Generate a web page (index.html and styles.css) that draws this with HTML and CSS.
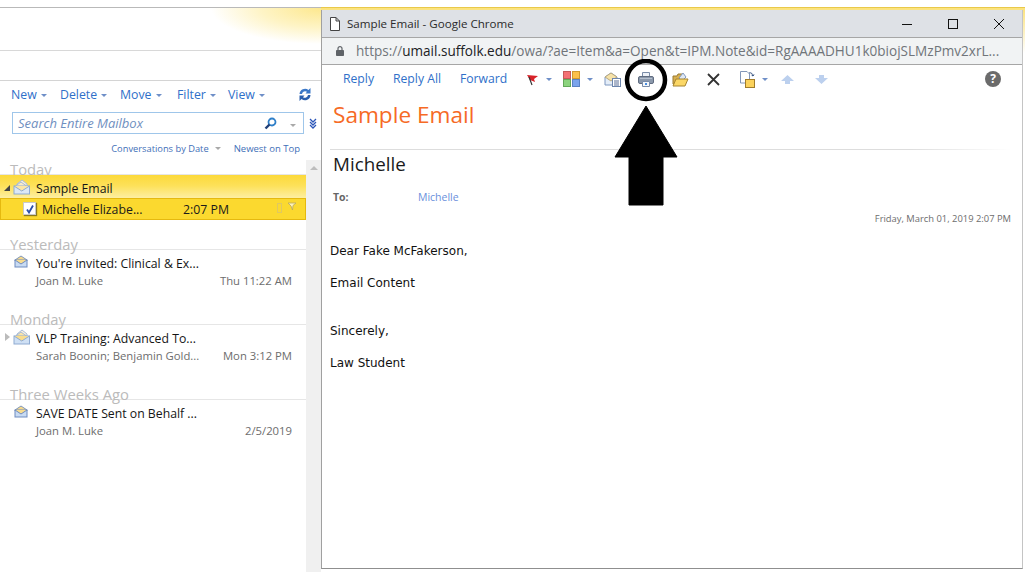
FILE: index.html
```html
<!DOCTYPE html>
<html lang="en">
<head>
  <meta charset="UTF-8">
  <meta name="viewport" content="width=device-width, initial-scale=1.0">
  <title>Sample Email</title>
  <link rel="stylesheet" href="styles.css">
</head>
<body>
  <div class="mailbox">
    <div class="banner"></div>
    <div class="nav-strip"></div>

    <div class="mail-tools">
      <a class="tool tool-new">New <i class="caret"></i></a>
      <a class="tool tool-delete">Delete <i class="caret"></i></a>
      <a class="tool tool-move">Move <i class="caret"></i></a>
      <a class="tool tool-filter">Filter <i class="caret"></i></a>
      <a class="tool tool-view">View <i class="caret"></i></a>
      <svg class="refresh" width="14" height="15" viewBox="0 0 14 15">
        <path d="M1.5 7A5.5 5.5 0 0 1 10.5 3L12.5 1V6.500H7.500L9 4.800A3.200 3.200 0 0 0 4 7Z" fill="#3b78c8"/>
        <path d="M12.500 8A5.500 5.500 0 0 1 3.500 12L1.500 14V8.500H6.500L5 10.200A3.200 3.200 0 0 0 10 8Z" fill="#2a5fae"/>
      </svg>
    </div>

    <div class="search-row">
      <div class="search-box">
        <span class="search-text">Search Entire Mailbox</span>
        <svg class="search-icon" width="13" height="13" viewBox="0 0 13 13">
          <circle cx="8" cy="5" r="3.500" fill="#fff" stroke="#2f7fc8" stroke-width="1.800"/>
          <path d="M5.500 7.500L1.500 11.500" stroke="#1f3f78" stroke-width="2.400"/>
        </svg>
        <i class="caret caret-grey"></i>
      </div>
      <svg class="expand" width="8" height="11" viewBox="0 0 8 11">
        <path d="M1 1L4 4L7 1M1 4L4 7L7 4M1 7L4 10L7 7" fill="none" stroke="#2b55b8" stroke-width="1.300"/>
      </svg>
    </div>

    <div class="sort-row">
      <span>Conversations by Date</span>
      <i class="caret caret-grey"></i>
      <span class="sort-order">Newest on Top</span>
    </div>

    <div class="list-wrap">
      <div class="mail-list">
        <section class="group">
          <h3 class="group-title">Today</h3>
          <div class="conv conv-open">
            <i class="twist twist-open"></i>
            <svg class="env" width="18" height="16" viewBox="0 0 18 16">
              <path d="M4 5L9 1L14 5V8H4Z" fill="#f7f1df" stroke="#a9bcd8"/>
              <path d="M2.500 7L8 3L13.500 7V9H2.500Z" fill="#f8ecc8" stroke="#a9bcd8"/>
              <rect x="1" y="7" width="15.500" height="8" fill="#dce8f6" stroke="#8fabd2"/>
              <path d="M1 7L8.750 12L16.500 7" fill="#fbe6a8" stroke="#8fabd2"/>
            </svg>
            <span class="subject">Sample Email</span>
          </div>
          <div class="conv-item">
            <span class="check">
              <svg width="10" height="10" viewBox="0 0 10 10"><path d="M2 5.500L4 8.500L8 1.500" fill="none" stroke="#2b4fa8" stroke-width="1.800"/></svg>
            </span>
            <span class="item-from">Michelle Elizabe...</span>
            <span class="item-time">2:07 PM</span>
            <i class="item-mark"></i>
            <svg class="item-flag" width="10" height="9" viewBox="0 0 10 9"><path d="M1 1H9L6 3.500L5.500 8L4 4Z" fill="#fff3b8" stroke="#b8a860" stroke-width=".8"/></svg>
          </div>
        </section>

        <section class="group">
          <h3 class="group-title">Yesterday</h3>
          <div class="conv">
            <svg class="env env-single" width="14" height="13" viewBox="0 0 14 13">
              <path d="M1 5L7 1L13 5V6H1Z" fill="#f6d98c" stroke="#8098bc"/>
              <rect x="1" y="5" width="12" height="7" fill="#c9dbf2" stroke="#6f8cc0"/>
              <path d="M1 5L7 9L13 5" fill="#f8dc8e" stroke="#6f8cc0"/>
            </svg>
            <span class="subject">You're invited: Clinical &amp; Ex...</span>
          </div>
          <div class="conv-meta"><span>Joan M. Luke</span><span>Thu 11:22 AM</span></div>
        </section>

        <section class="group">
          <h3 class="group-title">Monday</h3>
          <div class="conv">
            <i class="twist"></i>
            <svg class="env" width="18" height="16" viewBox="0 0 18 16">
              <path d="M4 5L9 1L14 5V8H4Z" fill="#f7f1df" stroke="#a9bcd8"/>
              <path d="M2.500 7L8 3L13.500 7V9H2.500Z" fill="#f8e4a8" stroke="#a9bcd8"/>
              <rect x="1" y="7" width="15.500" height="8" fill="#cfe0f4" stroke="#8fabd2"/>
              <path d="M1 7L8.750 12L16.500 7" fill="#f8dc8e" stroke="#8fabd2"/>
            </svg>
            <span class="subject">VLP Training: Advanced To...</span>
          </div>
          <div class="conv-meta"><span>Sarah Boonin; Benjamin Gold...</span><span>Mon 3:12 PM</span></div>
        </section>

        <section class="group">
          <h3 class="group-title">Three Weeks Ago</h3>
          <div class="conv">
            <svg class="env env-single" width="14" height="13" viewBox="0 0 14 13">
              <path d="M1 5L7 1L13 5V6H1Z" fill="#f6d98c" stroke="#8098bc"/>
              <rect x="1" y="5" width="12" height="7" fill="#c9dbf2" stroke="#6f8cc0"/>
              <path d="M1 5L7 9L13 5" fill="#f8dc8e" stroke="#6f8cc0"/>
            </svg>
            <span class="subject">SAVE DATE Sent on Behalf ...</span>
          </div>
          <div class="conv-meta"><span>Joan M. Luke</span><span>2/5/2019</span></div>
        </section>
      </div>
      <div class="scrollbar"><i class="scroll-up"></i></div>
    </div>
  </div>

  <div class="popup-wrap">
    <div class="popup">
      <div class="titlebar">
        <svg class="page-icon" width="10" height="14" viewBox="0 0 10 14">
          <path d="M.5.500H6L9.500 4V13.500H.5ZM6 .5V4H9.500" fill="#fff" stroke="#444"/>
        </svg>
        <span class="title-text">Sample Email - Google Chrome</span>
        <svg class="win-btn win-min" width="10" height="10" viewBox="0 0 10 10"><path d="M0 5.500H10" stroke="#111"/></svg>
        <svg class="win-btn win-max" width="10" height="10" viewBox="0 0 10 10"><rect x=".5" y=".5" width="9" height="9" fill="none" stroke="#111"/></svg>
        <svg class="win-btn win-close" width="10" height="10" viewBox="0 0 10 10"><path d="M0 0L10 10M10 0L0 10" stroke="#111"/></svg>
      </div>

      <div class="addressbar">
        <svg class="lock" width="8" height="10" viewBox="0 0 8 10">
          <path d="M2 4V2.600A2 2 0 0 1 6 2.600V4" fill="none" stroke="#5f6368" stroke-width="1.200"/>
          <rect y="4" width="8" height="6" rx=".8" fill="#5f6368"/>
        </svg>
        <span class="url">https://<b>umail.suffolk.edu</b>/owa/?ae=Item&amp;a=Open&amp;t=IPM.Note&amp;id=RgAAAADHU1k0biojSLMzPmv2xrL...</span>
      </div>

      <div class="read-tools">
        <a class="rt-link rt-reply">Reply</a>
        <a class="rt-link rt-replyall">Reply All</a>
        <a class="rt-link rt-forward">Forward</a>
        <svg class="rt-flag" width="13" height="13" viewBox="0 0 13 13">
          <path d="M1 2L12 3L8 6L9 9L4 7Z" fill="#d8232a"/>
          <path d="M3 4L6 12" stroke="#333" stroke-width="1.200"/>
        </svg>
        <i class="caret rt-caret"></i>
        <svg class="rt-colors" width="17" height="16" viewBox="0 0 17 16">
          <rect x=".5" y=".5" width="7" height="7" fill="#f47174" stroke="#c65a5a"/>
          <rect x="9.500" y=".5" width="7" height="7" fill="#fbc04a" stroke="#d09a30"/>
          <rect x=".5" y="8.500" width="7" height="7" fill="#8cd47e" stroke="#64a85a"/>
          <rect x="9.500" y="8.500" width="7" height="7" fill="#7ba4ec" stroke="#5b82c4"/>
        </svg>
        <i class="caret rt-caret"></i>
        <svg class="rt-envdoc" width="17" height="15" viewBox="0 0 17 15">
          <path d="M1 5L7 1L13 5V13H1Z" fill="#e4edf8" stroke="#7f98c0"/>
          <path d="M1 5L7 9L13 5L7 1Z" fill="#f6e2a8" stroke="#b8a880"/>
          <rect x="8.500" y="6.500" width="8" height="8" fill="#fff" stroke="#6d86ae"/>
          <path d="M10 9H15M10 11H15M10 13H15" stroke="#5a6f96"/>
        </svg>
        <svg class="rt-print" width="16" height="15" viewBox="0 0 16 15">
          <path d="M4.500.5H11.500V5H4.500Z" fill="#eef2f8" stroke="#7a8ca8"/>
          <rect x=".5" y="4.500" width="15" height="7" rx="1.500" fill="#8b98ab" stroke="#606c80"/>
          <path d="M4.500 9.500H11.500V14.500H4.500Z" fill="#f4f7fb" stroke="#7a8ca8"/>
          <rect x="7" y="11" width="2" height="2" fill="#4a8fe0"/>
          <path d="M2 6.500H14" stroke="#b6c0ce"/>
        </svg>
        <svg class="rt-folder" width="17" height="15" viewBox="0 0 17 15">
          <path d="M1 4H5L6 2H10V12H1Z" fill="#d8b050" stroke="#9a7a30"/>
          <path d="M7 6L11 1L14 5L10 9Z" fill="#dfe8f4" stroke="#7f98c0"/>
          <path d="M1 14L4 7H16L13 14Z" fill="#fbd766" stroke="#a68430"/>
        </svg>
        <svg class="rt-delete" width="13" height="13" viewBox="0 0 13 13">
          <path d="M1 1L12 12M12 1L1 12" stroke="#333" stroke-width="1.800"/>
        </svg>
        <svg class="rt-move" width="15" height="17" viewBox="0 0 15 17">
          <path d="M.5.500H7L9.500 3V12H.5Z" fill="#fff" stroke="#8296b8"/>
          <path d="M9 2A3 3 0 0 1 13 5M13 5L11.500 4M13 5L14 3.500" fill="none" stroke="#33507f"/>
          <rect x="5.500" y="8.500" width="9" height="8" fill="#fbd25c" stroke="#a07c2c"/>
        </svg>
        <i class="caret rt-caret"></i>
        <svg class="rt-prev" width="13" height="9" viewBox="0 0 13 9"><path d="M0 6L6.500 0L13 6H9V9H4V6Z" fill="#bcd0ee"/></svg>
        <svg class="rt-next" width="13" height="9" viewBox="0 0 13 9"><path d="M0 3L6.500 9L13 3H9V0H4V3Z" fill="#bcd0ee"/></svg>
        <span class="rt-help">?</span>
      </div>

      <div class="message">
        <h1 class="msg-subject">Sample Email</h1>
        <div class="msg-rule"></div>
        <h2 class="msg-from">Michelle</h2>
        <div class="msg-to"><b>To:</b><a>Michelle</a></div>
        <div class="msg-date">Friday, March 01, 2019 2:07 PM</div>
        <div class="msg-body">
          <p>Dear Fake McFakerson,</p>
          <p>Email Content</p>
          <p class="gap">Sincerely,</p>
          <p>Law Student</p>
        </div>
      </div>
    </div>
  </div>

  <svg class="callout" width="64" height="148" viewBox="0 0 64 148">
    <circle cx="32" cy="21" r="19" fill="none" stroke="#000" stroke-width="4.500"/>
    <path d="M32 47L63 98H49V146H15V98H1Z" fill="#000" stroke="#000" stroke-linejoin="round"/>
  </svg>
</body>
</html>
```

FILE: styles.css
```css
* {
  box-sizing: border-box;
}
html, body {
  margin: 0;
  height: 572px;
  overflow: hidden;
}
body {
  display: flex;
  background-color: #fff;
  color: #1a1a1a;
  font-family: "Open Sans", "Noto Sans", sans-serif;
  position: relative;
}
a {
  color: #2f6fc9;
}

/* left side, the mailbox */
.mailbox {
  width: 321px;
  flex: none;
  display: flex;
  flex-direction: column;
}
.banner {
  margin-top: 7px;
  height: 44px;
  border-top: 1px solid #b9b9b9;
  border-bottom: 1px solid #d8d8d8;
  background: radial-gradient(ellipse 110px 36px at 321px 0, #fde88e 0%, #fef4c6 55%, #fff 100%);
}
.nav-strip {
  height: 30px;
  border-bottom: 1px solid #d4d4d4;
}
.mail-tools {
  height: 27px;
  display: flex;
  align-items: center;
  font-size: 12.300px;
  padding-left: 11px;
}
.tool {
  white-space: nowrap;
}
.tool-new { width: 49px; }
.tool-delete { width: 60px; }
.tool-move { width: 57px; }
.tool-filter { width: 51px; }
.tool-view { width: 70px; }
.caret {
  display: inline-block;
  width: 0;
  height: 0;
  border-left: 3px solid transparent;
  border-right: 3px solid transparent;
  border-top: 3px solid #6f8fc8;
  vertical-align: middle;
  margin-left: 1px;
}
.caret-grey {
  border-top-color: #a9a9a9;
}
.search-row {
  height: 26px;
  padding: 4px 0 0 12px;
  display: flex;
  align-items: center;
}
.search-box {
  width: 292px;
  height: 22px;
  border: 1px solid #9fc6ea;
  display: flex;
  align-items: center;
  padding-left: 5px;
}
.search-text {
  flex: 1;
  font-size: 13px;
  font-style: italic;
  color: #6f8fc0;
}
.search-icon {
  margin-right: 13px;
}
.search-box .caret {
  margin: 4px 7px 0 0;
}
.expand {
  margin: 1px 0 0 5px;
}
.sort-row {
  height: 21px;
  padding: 7px 21px 0 0;
  display: flex;
  justify-content: flex-end;
  align-items: center;
  font-size: 9.300px;
  color: #3f6fb8;
}
.sort-row .caret {
  margin: 0 0 0 6px;
}
.sort-order {
  margin-left: 13px;
  font-size: 9.500px;
}
.list-wrap {
  flex: 1;
  display: flex;
}
.mail-list {
  width: 306px;
}
.scrollbar {
  width: 15px;
  margin-top: 5px;
  background-color: #f0f0f0;
  padding: 6px 0 0 4px;
}
.scroll-up {
  display: block;
  width: 0;
  height: 0;
  border-left: 4px solid transparent;
  border-right: 4px solid transparent;
  border-bottom: 4px solid #bdbdbd;
}

/* message groups */
.group {
  height: 75px;
}
.group-title {
  margin: 0;
  height: 20px;
  padding-left: 10px;
  border-bottom: 1px solid #e6e6e6;
  font-size: 14.800px;
  font-weight: 400;
  line-height: 28px;
  color: #bbb;
  white-space: nowrap;
}
.conv {
  height: 24px;
  padding: 2px 0 0 36px;
  display: flex;
  align-items: center;
  position: relative;
  font-size: 12.250px;
}
.subject {
  color: #151515;
  white-space: nowrap;
}
.env {
  position: absolute;
  left: 13px;
  top: 4px;
}
.env-single {
  left: 14px;
  top: 5px;
}
.twist {
  position: absolute;
  left: 5px;
  top: 8px;
  width: 0;
  height: 0;
  border-top: 4px solid transparent;
  border-bottom: 4px solid transparent;
  border-left: 5px solid #bbb;
}
.twist-open {
  left: 4px;
  top: 10px;
  border-top: 0;
  border-left: 6px solid transparent;
  border-bottom: 6px solid #444;
}
.conv-open {
  background: linear-gradient(#fcd93a 0%, #fde15a 45%, #fdf0a8 100%);
}
.conv-item {
  height: 22px;
  margin-top: -1px;
  border: 1px solid #e5b90f;
  border-right-width: 1px;
  background-color: #fbd92f;
  display: flex;
  align-items: center;
  position: relative;
  font-size: 12.300px;
  color: #1a1a1a;
}
.check {
  position: absolute;
  left: 22px;
  top: 3px;
  width: 13px;
  height: 13px;
  background-color: #fff;
  border: 1px solid #c9c9c9;
  box-shadow: 1px 1px 1px #8a7a20;
  display: flex;
  align-items: center;
  justify-content: center;
}
.item-from {
  margin-left: 41px;
  width: 141px;
  white-space: nowrap;
}
.item-mark {
  position: absolute;
  left: 276px;
  top: 4px;
  width: 5px;
  height: 10px;
  border: 1px solid #e0c860;
}
.item-flag {
  position: absolute;
  left: 286px;
  top: 3px;
}
.conv-meta {
  height: 18px;
  margin-top: -3px;
  padding: 0 14px 0 36px;
  display: flex;
  justify-content: space-between;
  align-items: center;
  font-size: 11.300px;
  color: #6d6d6d;
  white-space: nowrap;
}

/* chrome popup window */
.popup-wrap {
  width: 704px;
  flex: none;
  margin-top: 7px;
  padding: 2px 2px 3px 0;
  border-top: 1px solid #e9c94a;
  background: linear-gradient(#fbe27c 0, #fff 45px);
}
.popup {
  height: 100%;
  border-left: 1px solid #a0a0a0;
  border-bottom: 1px solid #8f8f8f;
  border-right: 1px solid #c4c4c4;
  background-color: #fff;
  display: flex;
  flex-direction: column;
}
.titlebar {
  height: 28px;
  flex: none;
  background-color: #dee1e6;
  border-bottom: 1px solid #a6a6a6;
  display: flex;
  align-items: center;
  padding-left: 8px;
}
.title-text {
  margin-left: 7px;
  flex: 1;
  font-size: 11.600px;
  color: #2b2b2b;
}
.win-btn {
  flex: none;
}
.win-min { margin-right: 36px; }
.win-max { margin-right: 36px; }
.win-close { margin-right: 18px; }
.addressbar {
  height: 27px;
  flex: none;
  background-color: #f1f3f4;
  border-bottom: 1px solid #a6a6a6;
  display: flex;
  align-items: center;
  padding-left: 14px;
}
.url {
  margin-left: 12px;
  font-size: 13.550px;
  color: #70757a;
  white-space: nowrap;
}
.url b {
  font-weight: 400;
  color: #202124;
}
.read-tools {
  height: 28px;
  flex: none;
  display: flex;
  align-items: center;
  font-size: 12.200px;
}
.rt-link {
  white-space: nowrap;
  padding-bottom: 2px;
}
.rt-reply { margin-left: 21px; width: 50px; }
.rt-replyall { width: 67px; }
.rt-forward { width: 66px; }
.rt-caret {
  margin-left: 7px;
}
.rt-colors { margin-left: 11px; }
.rt-envdoc { margin-left: 11px; }
.rt-print { margin-left: 17px; }
.rt-folder { margin-left: 18px; }
.rt-delete { margin-left: 18px; }
.rt-move { margin-left: 20px; }
.rt-prev { margin-left: 13px; }
.rt-next { margin-left: 21px; }
.rt-help {
  margin-left: 157px;
  width: 16px;
  height: 16px;
  border-radius: 50%;
  background-color: #6b6b6b;
  color: #fff;
  font-size: 12px;
  font-weight: 700;
  line-height: 16px;
  text-align: center;
}
.message {
  flex: 1;
  padding: 0 11px 0 8px;
}
.msg-subject {
  margin: 6px 0 0 3px;
  font-size: 22.600px;
  font-weight: 400;
  line-height: 32px;
  color: #f66a25;
}
.msg-rule {
  height: 1px;
  margin-top: 18px;
  background: linear-gradient(to right, #ddd 85%, #fff 100%);
}
.msg-from {
  margin: 1px 0 0 3px;
  font-size: 18.800px;
  font-weight: 400;
  line-height: 26px;
  color: #1a1a1a;
}
.msg-to {
  margin: 12px 0 0 3px;
  display: flex;
  font-size: 10.500px;
  line-height: 16px;
}
.msg-to b {
  width: 85px;
  color: #666;
}
.msg-to a {
  color: #6a8fdc;
}
.msg-date {
  margin-top: 7px;
  font-size: 9.400px;
  line-height: 14px;
  text-align: right;
  color: #6d6d6d;
}
.msg-body {
  margin-top: 17px;
  font-family: "DejaVu Sans", sans-serif;
  font-size: 12px;
  color: #111;
}
.msg-body p {
  margin: 0 0 16px;
  line-height: 16px;
}
.msg-body .gap {
  margin-top: 32px;
}

/* annotation drawn over the screenshot */
.callout {
  position: absolute;
  left: 614px;
  top: 59px;
}
```
